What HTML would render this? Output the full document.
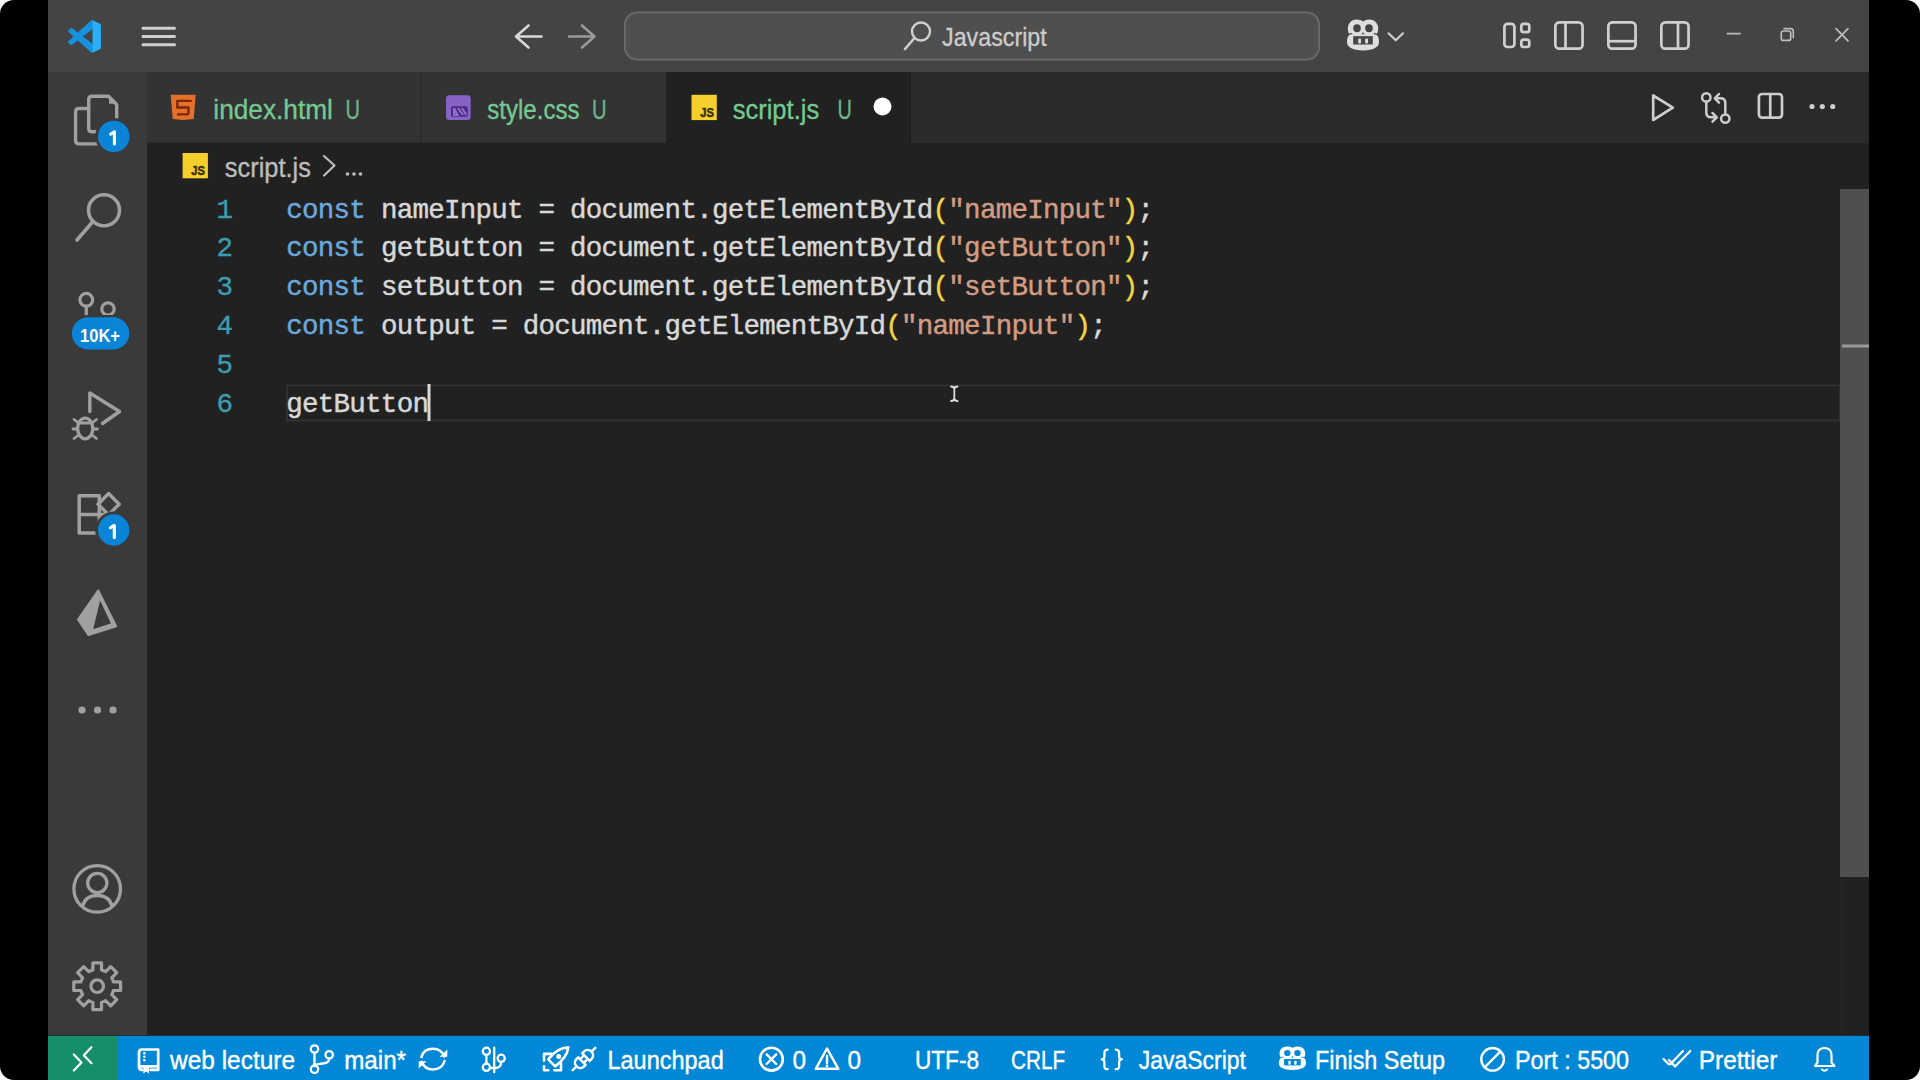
<!DOCTYPE html>
<html><head><meta charset="utf-8"><style>
html,body{margin:0;padding:0;background:#fff;width:1920px;height:1080px;overflow:hidden}
svg{display:block} #w{width:1920px;height:1080px}
</style></head><body><div id="w">
<svg width="1920" height="1080" viewBox="0 0 1920 1080">
<rect x="0" y="0" width="1920" height="1080" fill="#fff"/>
<rect x="0" y="0" width="1920" height="1080" rx="14" ry="14" fill="#000"/>
<rect x="48" y="0" width="1821" height="72" fill="#444444" />
<rect x="48" y="72" width="99" height="963" fill="#3a3a3a" />
<rect x="147" y="72" width="1722" height="71" fill="#2a2a2a" />
<rect x="147" y="143" width="1722" height="892" fill="#212121" />
<rect x="147" y="72" width="273" height="70.5" fill="#333333" />
<rect x="420" y="72" width="1.5" height="70.5" fill="#2a2a2a" />
<rect x="421.5" y="72" width="244.5" height="70.5" fill="#333333" />
<rect x="666" y="72" width="244" height="71" fill="#212121" />
<rect x="910" y="72" width="1" height="71" fill="#1c1c1c" />
<rect x="48" y="1035" width="1821" height="45" fill="#0087d6" />
<rect x="48" y="1035" width="69" height="45" fill="#168e6a" />
<rect x="48" y="1035" width="1821" height="1" fill="#1d3140" />
<text x="213.30" y="118.8" font-family="Liberation Sans" font-size="27" font-weight="normal" fill="#73c991" stroke="#73c991" stroke-width="0.35" textLength="119.64" lengthAdjust="spacingAndGlyphs">index.html</text>
<text x="345.60" y="118.8" font-family="Liberation Sans" font-size="27" font-weight="normal" fill="#6db58a" stroke="#6db58a" stroke-width="0.35" textLength="14.44" lengthAdjust="spacingAndGlyphs">U</text>
<text x="487.30" y="118.8" font-family="Liberation Sans" font-size="27" font-weight="normal" fill="#73c991" stroke="#73c991" stroke-width="0.35" textLength="92.18" lengthAdjust="spacingAndGlyphs">style.css</text>
<text x="592.00" y="118.8" font-family="Liberation Sans" font-size="27" font-weight="normal" fill="#6db58a" stroke="#6db58a" stroke-width="0.35" textLength="14.54" lengthAdjust="spacingAndGlyphs">U</text>
<text x="732.70" y="118.8" font-family="Liberation Sans" font-size="27" font-weight="normal" fill="#73c991" stroke="#73c991" stroke-width="0.35" textLength="86.48" lengthAdjust="spacingAndGlyphs">script.js</text>
<text x="837.60" y="118.8" font-family="Liberation Sans" font-size="27" font-weight="normal" fill="#6db58a" stroke="#6db58a" stroke-width="0.35" textLength="14.34" lengthAdjust="spacingAndGlyphs">U</text>
<circle cx="882.5" cy="106.5" r="9" fill="#ffffff"/>
<text x="224.80" y="176.5" font-family="Liberation Sans" font-size="27" font-weight="normal" fill="#bdbdbd" stroke="#bdbdbd" stroke-width="0.35" textLength="86.08" lengthAdjust="spacingAndGlyphs">script.js</text>
<path d="M324 156 L334.5 165.5 L324 175.5" stroke="#bdbdbd" stroke-width="2.2" fill="none" stroke-linecap="round" stroke-linejoin="round" />
<circle cx="347.5" cy="174" r="1.8" fill="#bdbdbd"/>
<circle cx="354" cy="174" r="1.8" fill="#bdbdbd"/>
<circle cx="360.5" cy="174" r="1.8" fill="#bdbdbd"/>
<rect x="287" y="385.5" width="1553" height="35" fill="none" stroke="#303030" stroke-width="2"/>
<text x="216.50" y="217.50" font-family="Liberation Mono" font-size="27.5" fill="#3d9cb0" stroke="#3d9cb0" stroke-width="0.35" letter-spacing="-0.740">1</text>
<text x="286.30" y="217.50" font-family="Liberation Mono" font-size="27.5" letter-spacing="-0.740" xml:space="preserve" stroke-width="0.45"><tspan fill="#6aa8de" stroke="#6aa8de">const</tspan><tspan fill="#d8d8d8" stroke="#d8d8d8"> nameInput = document.getElementById</tspan><tspan fill="#f2d444" stroke="#f2d444">(</tspan><tspan fill="#d29c82" stroke="#d29c82">&quot;nameInput&quot;</tspan><tspan fill="#f2d444" stroke="#f2d444">)</tspan><tspan fill="#d8d8d8" stroke="#d8d8d8">;</tspan></text>
<text x="216.50" y="256.40" font-family="Liberation Mono" font-size="27.5" fill="#3d9cb0" stroke="#3d9cb0" stroke-width="0.35" letter-spacing="-0.740">2</text>
<text x="286.30" y="256.40" font-family="Liberation Mono" font-size="27.5" letter-spacing="-0.740" xml:space="preserve" stroke-width="0.45"><tspan fill="#6aa8de" stroke="#6aa8de">const</tspan><tspan fill="#d8d8d8" stroke="#d8d8d8"> getButton = document.getElementById</tspan><tspan fill="#f2d444" stroke="#f2d444">(</tspan><tspan fill="#d29c82" stroke="#d29c82">&quot;getButton&quot;</tspan><tspan fill="#f2d444" stroke="#f2d444">)</tspan><tspan fill="#d8d8d8" stroke="#d8d8d8">;</tspan></text>
<text x="216.50" y="295.30" font-family="Liberation Mono" font-size="27.5" fill="#3d9cb0" stroke="#3d9cb0" stroke-width="0.35" letter-spacing="-0.740">3</text>
<text x="286.30" y="295.30" font-family="Liberation Mono" font-size="27.5" letter-spacing="-0.740" xml:space="preserve" stroke-width="0.45"><tspan fill="#6aa8de" stroke="#6aa8de">const</tspan><tspan fill="#d8d8d8" stroke="#d8d8d8"> setButton = document.getElementById</tspan><tspan fill="#f2d444" stroke="#f2d444">(</tspan><tspan fill="#d29c82" stroke="#d29c82">&quot;setButton&quot;</tspan><tspan fill="#f2d444" stroke="#f2d444">)</tspan><tspan fill="#d8d8d8" stroke="#d8d8d8">;</tspan></text>
<text x="216.50" y="334.20" font-family="Liberation Mono" font-size="27.5" fill="#3d9cb0" stroke="#3d9cb0" stroke-width="0.35" letter-spacing="-0.740">4</text>
<text x="286.30" y="334.20" font-family="Liberation Mono" font-size="27.5" letter-spacing="-0.740" xml:space="preserve" stroke-width="0.45"><tspan fill="#6aa8de" stroke="#6aa8de">const</tspan><tspan fill="#d8d8d8" stroke="#d8d8d8"> output = document.getElementById</tspan><tspan fill="#f2d444" stroke="#f2d444">(</tspan><tspan fill="#d29c82" stroke="#d29c82">&quot;nameInput&quot;</tspan><tspan fill="#f2d444" stroke="#f2d444">)</tspan><tspan fill="#d8d8d8" stroke="#d8d8d8">;</tspan></text>
<text x="216.50" y="373.10" font-family="Liberation Mono" font-size="27.5" fill="#3d9cb0" stroke="#3d9cb0" stroke-width="0.35" letter-spacing="-0.740">5</text>
<text x="216.50" y="412.00" font-family="Liberation Mono" font-size="27.5" fill="#3d9cb0" stroke="#3d9cb0" stroke-width="0.35" letter-spacing="-0.740">6</text>
<text x="286.30" y="412.00" font-family="Liberation Mono" font-size="27.5" letter-spacing="-0.740" xml:space="preserve" stroke-width="0.45"><tspan fill="#d8d8d8" stroke="#d8d8d8">getButton</tspan></text>
<rect x="427.5" y="384" width="3.0" height="37" fill="#d8d8d8" />
<rect x="1840" y="189" width="29" height="688" fill="#4f4f4f" />
<rect x="1842" y="344.5" width="27" height="3.0" fill="#9a9a9a" />
<text x="170.12" y="1068.8" font-family="Liberation Sans" font-size="25.5" font-weight="normal" fill="#ffffff" stroke="#ffffff" stroke-width="0.4" textLength="124.85" lengthAdjust="spacingAndGlyphs">web lecture</text>
<text x="344.20" y="1068.8" font-family="Liberation Sans" font-size="25.5" font-weight="normal" fill="#ffffff" stroke="#ffffff" stroke-width="0.4" textLength="61.84" lengthAdjust="spacingAndGlyphs">main*</text>
<text x="607.50" y="1068.8" font-family="Liberation Sans" font-size="25.5" font-weight="normal" fill="#ffffff" stroke="#ffffff" stroke-width="0.4" textLength="116.24" lengthAdjust="spacingAndGlyphs">Launchpad</text>
<text x="792.50" y="1068.8" font-family="Liberation Sans" font-size="25.5" font-weight="normal" fill="#ffffff" stroke="#ffffff" stroke-width="0.4" textLength="13.53" lengthAdjust="spacingAndGlyphs">0</text>
<text x="847.50" y="1068.8" font-family="Liberation Sans" font-size="25.5" font-weight="normal" fill="#ffffff" stroke="#ffffff" stroke-width="0.4" textLength="13.53" lengthAdjust="spacingAndGlyphs">0</text>
<text x="915.00" y="1068.8" font-family="Liberation Sans" font-size="25.5" font-weight="normal" fill="#ffffff" stroke="#ffffff" stroke-width="0.4" textLength="63.96" lengthAdjust="spacingAndGlyphs">UTF-8</text>
<text x="1011.00" y="1068.8" font-family="Liberation Sans" font-size="25.5" font-weight="normal" fill="#ffffff" stroke="#ffffff" stroke-width="0.4" textLength="54.03" lengthAdjust="spacingAndGlyphs">CRLF</text>
<text x="1138.75" y="1068.8" font-family="Liberation Sans" font-size="25.5" font-weight="normal" fill="#ffffff" stroke="#ffffff" stroke-width="0.4" textLength="107.22" lengthAdjust="spacingAndGlyphs">JavaScript</text>
<text x="1315.00" y="1068.8" font-family="Liberation Sans" font-size="25.5" font-weight="normal" fill="#ffffff" stroke="#ffffff" stroke-width="0.4" textLength="129.97" lengthAdjust="spacingAndGlyphs">Finish Setup</text>
<text x="1515.00" y="1068.8" font-family="Liberation Sans" font-size="25.5" font-weight="normal" fill="#ffffff" stroke="#ffffff" stroke-width="0.4" textLength="114.05" lengthAdjust="spacingAndGlyphs">Port : 5500</text>
<text x="1698.75" y="1068.8" font-family="Liberation Sans" font-size="25.5" font-weight="normal" fill="#ffffff" stroke="#ffffff" stroke-width="0.4" textLength="78.71" lengthAdjust="spacingAndGlyphs">Prettier</text>
<g transform="translate(68.2,20.2) scale(0.326)"><path d="M96.46 10.8 L75.86 0.87 C73.48 -0.28 70.63 0.21 68.76 2.08 L29.35 38.04 L12.19 25.01 C10.59 23.8 8.35 23.9 6.87 25.25 L1.36 30.26 C-0.46 31.91 -0.46 34.77 1.35 36.42 L16.28 50 L1.35 63.58 C-0.46 65.23 -0.46 68.09 1.36 69.74 L6.87 74.75 C8.35 76.1 10.59 76.2 12.19 74.99 L29.35 61.96 L68.76 97.92 C70.63 99.79 73.48 100.28 75.86 99.13 L96.46 89.2 C98.62 88.16 100 85.97 100 83.57 V16.43 C100 14.03 98.62 11.84 96.46 10.8 Z M75.01 72.7 L45.11 50 L75.01 27.3 V72.7 Z" fill="#1593de" fill-rule="evenodd"/><path d="M75 0.5 L96.46 10.8 C98.62 11.84 100 14.03 100 16.43 V83.57 C100 85.97 98.62 88.16 96.46 89.2 L75.86 99.13 L75 99.5 Z" fill="#2aaef5"/></g>
<rect x="141.7" y="26.8" width="34.1" height="3" rx="1" fill="#d0d0d0"/>
<rect x="141.7" y="34.9" width="34.1" height="3" rx="1" fill="#d0d0d0"/>
<rect x="141.7" y="43.25" width="34.1" height="3" rx="1" fill="#d0d0d0"/>
<path d="M528.5 25.5 L516 36.5 L528.5 47.5 M516 36.5 L541.5 36.5" stroke="#d8d8d8" stroke-width="2.6" fill="none" stroke-linecap="round" stroke-linejoin="round" />
<path d="M582 25.5 L594.5 36.5 L582 47.5 M594.5 36.5 L569 36.5" stroke="#9a9a9a" stroke-width="2.6" fill="none" stroke-linecap="round" stroke-linejoin="round" />
<rect x="625" y="12.5" width="694" height="47" rx="12" fill="#4f4f4f" stroke="#686868" stroke-width="2"/>
<text x="942.00" y="46" font-family="Liberation Sans" font-size="25.5" font-weight="normal" fill="#cccccc" stroke="#cccccc" stroke-width="0.35" textLength="104.74" lengthAdjust="spacingAndGlyphs">Javascript</text>
<circle cx="921" cy="31.5" r="9" fill="none" stroke="#d0d0d0" stroke-width="2.4"/>
<path d="M914.5 38 L905 49" stroke="#d0d0d0" stroke-width="2.6" fill="none" stroke-linecap="round" stroke-linejoin="round" />
<g transform="translate(1346,20.4) scale(1.0000,0.9839)"><path d="M4.5 13 C2 6 5 1 11 1 C15 1 17 3 17 6 C17 3 19 1 23 1 C29 1 32 6 29.5 13" fill="none" stroke="#dedede" stroke-width="3.6"/><ellipse cx="11" cy="8" rx="5.5" ry="5.8" fill="none" stroke="#dedede" stroke-width="3.4"/><ellipse cx="23" cy="8" rx="5.5" ry="5.8" fill="none" stroke="#dedede" stroke-width="3.4"/><path d="M1 22 C1 16 3 14 6 14 L28 14 C31 14 33 16 33 22 C33 27 28 30.5 17 30.5 C6 30.5 1 27 1 22 Z" fill="#dedede"/><rect x="7.2" y="16" width="19.6" height="8.5" fill="#474747"/><rect x="12.2" y="18.3" width="2.8" height="5.2" rx="1" fill="#dedede"/><rect x="19.2" y="18.3" width="2.8" height="5.2" rx="1" fill="#dedede"/></g>
<path d="M1388.5 33.3 L1395.8 40.3 L1403 33.3" stroke="#cfcfcf" stroke-width="2.2" fill="none" stroke-linecap="round" stroke-linejoin="round" />
<rect x="1504.4" y="23.9" width="10" height="23.1" rx="3" fill="none" stroke="#d0d0d0" stroke-width="2.7"/>
<rect x="1521.3" y="23.9" width="8" height="8.3" rx="2.5" fill="none" stroke="#d0d0d0" stroke-width="2.7"/>
<rect x="1521.3" y="39.6" width="8" height="7.4" rx="2.5" fill="none" stroke="#d0d0d0" stroke-width="2.7"/>
<rect x="1555.35" y="22.35" width="27.2" height="26.3" rx="4" fill="none" stroke="#d0d0d0" stroke-width="2.7"/>
<rect x="1564.15" y="22" width="2.7" height="27" fill="#d0d0d0"/>
<rect x="1608.35" y="22.35" width="27.2" height="26.3" rx="4" fill="none" stroke="#d0d0d0" stroke-width="2.7"/>
<rect x="1607.5" y="39.85" width="29" height="2.7" fill="#d0d0d0"/>
<rect x="1661.35" y="22.35" width="27.2" height="26.3" rx="4" fill="none" stroke="#d0d0d0" stroke-width="2.7"/>
<rect x="1676.65" y="22" width="2.7" height="27" fill="#d0d0d0"/>
<path d="M1727.5 33.6 L1740 33.6" stroke="#bdbdbd" stroke-width="1.8" fill="none" stroke-linecap="round" stroke-linejoin="round" />
<rect x="1781.3" y="31" width="9.4" height="9.4" rx="2" fill="none" stroke="#bdbdbd" stroke-width="1.7"/>
<path d="M1784 28.6 L1790.5 28.6 C1792.2 28.6 1793.3 29.7 1793.3 31.4 L1793.3 37.8" stroke="#bdbdbd" stroke-width="1.6" fill="none" stroke-linecap="round" stroke-linejoin="round" />
<path d="M1836 28.6 L1848 40.9 M1848 28.6 L1836 40.9" stroke="#bdbdbd" stroke-width="1.7" fill="none" stroke-linecap="round" stroke-linejoin="round" />
<path d="M170.7 94.7 L195.7 94.7 L193.7 119 L183.2 120 L172.7 119 Z" fill="#e4702a"/>
<path d="M190.8 100.9 L177.3 100.9 L177.3 107.5 L188.5 107.5 L188.5 112.5 C188.5 113.8 187.6 114.4 186.4 114.4 L178 114.4" stroke="#7a2808" stroke-width="2.4" fill="none" stroke-linecap="round" stroke-linejoin="round" stroke-linecap="butt"/>
<rect x="446" y="95.2" width="24.7" height="24.8" rx="3.5" fill="#8763c6"/>
<rect x="451" y="106.2" width="16.8" height="10.6" rx="1.5" fill="#4c2d86"/>
<path d="M454 108.2 L457.5 115 L454 115 Z M458 108.2 L463 115 M462 108.2 L466.5 115" stroke="#8f6fce" stroke-width="2" fill="none"/>
<rect x="691.5" y="94.8" width="25.3" height="25.3" fill="#f5cf2c"/>
<text x="700.20" y="117.1" font-family="Liberation Sans" font-size="13.5" font-weight="bold" fill="#3b3205" stroke="#3b3205" stroke-width="0.6" textLength="13.62" lengthAdjust="spacingAndGlyphs">JS</text>
<rect x="182.6" y="153" width="25.3" height="25.3" fill="#f5cf2c"/>
<text x="191.30" y="175.3" font-family="Liberation Sans" font-size="13.5" font-weight="bold" fill="#3b3205" stroke="#3b3205" stroke-width="0.6" textLength="13.62" lengthAdjust="spacingAndGlyphs">JS</text>
<path d="M1653.2 95.5 L1653.2 120 L1672.8 107.7 Z" stroke="#cccccc" stroke-width="2.7" fill="none" stroke-linecap="round" stroke-linejoin="round" />
<circle cx="1706.3" cy="97.4" r="4.2" fill="none" stroke="#cccccc" stroke-width="2.5"/>
<circle cx="1725.3" cy="118.6" r="4.2" fill="none" stroke="#cccccc" stroke-width="2.5"/>
<path d="M1706.3 101.7 L1706.3 112.5 C1706.3 115.5 1708 117.3 1711 117.3 L1716.5 117.3 M1712.5 113 L1716.8 117.3 L1712.5 121.6" stroke="#cccccc" stroke-width="2.5" fill="none" stroke-linecap="round" stroke-linejoin="round" />
<path d="M1725.3 114.3 L1725.3 103 C1725.3 100 1723.6 98.3 1720.6 98.3 L1715 98.3 M1719 94 L1714.8 98.3 L1719 102.6" stroke="#cccccc" stroke-width="2.5" fill="none" stroke-linecap="round" stroke-linejoin="round" />
<rect x="1758.9" y="94" width="23.1" height="23.6" rx="3" fill="none" stroke="#cccccc" stroke-width="2.7"/>
<rect x="1768.9" y="93" width="2.7" height="25.5" fill="#cccccc"/>
<circle cx="1812" cy="106.5" r="2.6" fill="#cccccc"/>
<circle cx="1822.3" cy="106.5" r="2.6" fill="#cccccc"/>
<circle cx="1832.7" cy="106.5" r="2.6" fill="#cccccc"/>
<path d="M88.7 108.5 L79 108.5 C76.8 108.5 75.6 109.8 75.6 112 L75.6 140.5 C75.6 142.7 76.8 143.9 79 143.9 L99 143.9" stroke="#a0a0a0" stroke-width="3.4" fill="none" stroke-linecap="round" stroke-linejoin="round" />
<path d="M88.7 108.5 L88.7 99.5 C88.7 97.3 89.9 96.2 92 96.2 L108.5 96.2 L116.7 104.5 L116.7 125" stroke="#a0a0a0" stroke-width="3.4" fill="none" stroke-linecap="round" stroke-linejoin="round" />
<path d="M88.7 108.5 L88.7 128.5 C88.7 130.7 89.9 131.8 92 131.8 L99 131.8" stroke="#a0a0a0" stroke-width="3.4" fill="none" stroke-linecap="round" stroke-linejoin="round" />
<path d="M109 97 L109 103.8 L116 103.8 Z" fill="#a0a0a0"/>
<circle cx="113.8" cy="136.4" r="18.5" fill="#3a3a3a"/>
<circle cx="113.8" cy="136.4" r="15.7" fill="#0a84d6"/>
<path d="M110.5 134.20000000000002 L114.39999999999999 131.8 L114.39999999999999 144.0" stroke="#ffffff" stroke-width="3.1" fill="none" stroke-linecap="round" stroke-linejoin="round" stroke-linecap="butt" stroke-linejoin="miter"/>
<circle cx="104" cy="210.3" r="15.5" fill="none" stroke="#a0a0a0" stroke-width="3.5"/>
<path d="M92.5 222 L77 240" stroke="#a0a0a0" stroke-width="3.6" fill="none" stroke-linecap="round" stroke-linejoin="round" />
<circle cx="86.3" cy="299.8" r="6.4" fill="none" stroke="#a0a0a0" stroke-width="3.2"/>
<circle cx="108" cy="309" r="6.2" fill="none" stroke="#a0a0a0" stroke-width="3.2"/>
<rect x="84.7" y="305" width="3.2" height="14" fill="#a0a0a0"/>
<rect x="69.8" y="315" width="61.6" height="36.8" rx="18.4" fill="#3a3a3a"/>
<rect x="71.9" y="317.2" width="57.4" height="32.4" rx="16.2" fill="#0a84d6"/>
<text x="80.00" y="341.6" font-family="Liberation Sans" font-size="18" font-weight="bold" fill="#ffffff" textLength="39.97" lengthAdjust="spacingAndGlyphs">10K+</text>
<path d="M89.8 411.5 L89.8 393 L119.5 411.5 L102.5 423.5" stroke="#a0a0a0" stroke-width="3.4" fill="none" stroke-linecap="round" stroke-linejoin="round" />
<ellipse cx="85.2" cy="428.5" rx="7.6" ry="10.3" fill="none" stroke="#a0a0a0" stroke-width="3.3"/>
<path d="M78 423 L92.5 423" stroke="#a0a0a0" stroke-width="3" fill="none" stroke-linecap="round" stroke-linejoin="round" />
<path d="M74 419.5 L78 422.5 M96.5 419.5 L92.5 422.5 M73 429 L77.5 429 M97.5 429 L93 429 M74 438.5 L78 435.5 M96.5 438.5 L92.5 435.5" stroke="#a0a0a0" stroke-width="2.8" fill="none" stroke-linecap="round" stroke-linejoin="round" />
<path d="M99.3 514.4 L99.3 495.8 L79.2 495.8 L79.2 533 L110 533 L110 514.4 L79.2 514.4" stroke="#a0a0a0" stroke-width="3.5" fill="none" stroke-linecap="round" stroke-linejoin="round" stroke-linejoin="round"/>
<path d="M99.3 514.4 L99.3 533" stroke="#a0a0a0" stroke-width="3.5" fill="none" stroke-linecap="round" stroke-linejoin="round" />
<path d="M108.6 493.5 L119.2 504.2 L108.6 514.8 L98 504.2 Z" stroke="#a0a0a0" stroke-width="3.4" fill="none" stroke-linecap="round" stroke-linejoin="round" />
<circle cx="113.7" cy="530" r="18.5" fill="#3a3a3a"/>
<circle cx="113.7" cy="530" r="15.7" fill="#0a84d6"/>
<path d="M110.4 527.8 L114.3 525.4 L114.3 537.6" stroke="#ffffff" stroke-width="3.1" fill="none" stroke-linecap="round" stroke-linejoin="round" stroke-linecap="butt" stroke-linejoin="miter"/>
<path d="M98.2 590.5 L78 619.5 L88.4 635 L116.2 626.3 Z M99.8 597.5 L112.3 624 L91.8 630.8 Z" fill="#a0a0a0" fill-rule="evenodd" stroke="#a0a0a0" stroke-width="2" stroke-linejoin="round"/>
<circle cx="82" cy="710" r="3.6" fill="#a0a0a0"/>
<circle cx="97.5" cy="710" r="3.6" fill="#a0a0a0"/>
<circle cx="113" cy="710" r="3.6" fill="#a0a0a0"/>
<circle cx="97.2" cy="888.9" r="23.3" fill="none" stroke="#a0a0a0" stroke-width="3.3"/>
<circle cx="97.3" cy="883" r="9.6" fill="none" stroke="#a0a0a0" stroke-width="3.3"/>
<path d="M82.5 906 C84.5 899 90 895.5 97.3 895.5 C104.6 895.5 110.1 899 112.1 906" stroke="#a0a0a0" stroke-width="3.3" fill="none" stroke-linecap="round" stroke-linejoin="round" />
<path d="M92.90 969.96 L92.90 962.80 L101.50 962.80 L101.50 969.96 A16.8 16.8 0 0 1 105.64 971.68 L110.71 966.61 L116.79 972.69 L111.72 977.76 A16.8 16.8 0 0 1 113.44 981.90 L120.60 981.90 L120.60 990.50 L113.44 990.50 A16.8 16.8 0 0 1 111.72 994.64 L116.79 999.71 L110.71 1005.79 L105.64 1000.72 A16.8 16.8 0 0 1 101.50 1002.44 L101.50 1009.60 L92.90 1009.60 L92.90 1002.44 A16.8 16.8 0 0 1 88.76 1000.72 L83.69 1005.79 L77.61 999.71 L82.68 994.64 A16.8 16.8 0 0 1 80.96 990.50 L73.80 990.50 L73.80 981.90 L80.96 981.90 A16.8 16.8 0 0 1 82.68 977.76 L77.61 972.69 L83.69 966.61 L88.76 971.68 A16.8 16.8 0 0 1 92.90 969.96 Z" stroke="#a0a0a0" stroke-width="3.2" fill="none" stroke-linecap="round" stroke-linejoin="round" />
<circle cx="97.2" cy="986.2" r="6.3" fill="none" stroke="#a0a0a0" stroke-width="3.2"/>
<path d="M73.8 1054.5 L81.5 1062.5 L73.8 1070.5" stroke="#ffffff" stroke-width="2.2" fill="none" stroke-linecap="round" stroke-linejoin="round" />
<path d="M91.5 1047.2 L83.8 1055.2 L91.5 1063.2" stroke="#ffffff" stroke-width="2.2" fill="none" stroke-linecap="round" stroke-linejoin="round" />
<path d="M139 1066.3 L139 1052.5 C139 1050.5 140 1049.5 142 1049.5 L158.2 1049.5 L158.2 1069.9 L150.5 1069.9 M142.5 1069.9 L142 1069.9 C140 1069.9 139 1068.9 139 1066.8 C139 1066.5 139.5 1066.3 142 1066.3 L158.2 1066.3" stroke="#ffffff" stroke-width="2.7" fill="none" stroke-linecap="round" stroke-linejoin="round" />
<circle cx="144.3" cy="1053.3" r="1.3" fill="#ffffff"/>
<circle cx="144.3" cy="1056.8" r="1.3" fill="#ffffff"/>
<circle cx="144.3" cy="1060.3" r="1.3" fill="#ffffff"/>
<path d="M143.3 1067 L149 1067 L149 1073.4 L146.2 1071.6 L143.3 1073.4 Z" fill="#ffffff"/>
<circle cx="314.5" cy="1049" r="3.7" fill="none" stroke="#ffffff" stroke-width="2.3"/>
<circle cx="314.5" cy="1069.2" r="3.7" fill="none" stroke="#ffffff" stroke-width="2.3"/>
<circle cx="329.2" cy="1054.8" r="3.7" fill="none" stroke="#ffffff" stroke-width="2.3"/>
<path d="M314.5 1052.7 L314.5 1065.5 M329.2 1058.5 C329.2 1063 325 1063.3 320 1063.8 C316.5 1064.2 314.5 1065 314.5 1066" stroke="#ffffff" stroke-width="2.3" fill="none" stroke-linecap="round" stroke-linejoin="round" />
<path d="M421.5 1057 C423 1051.5 427.5 1048.8 433 1048.8 C438.3 1048.8 442.5 1051.8 444.3 1056.5 M444.5 1061 C443 1066.5 438.5 1069.5 433 1069.5 C427.6 1069.5 423.4 1066.5 421.6 1061.8" stroke="#ffffff" stroke-width="2.5" fill="none" stroke-linecap="round" stroke-linejoin="round" />
<path d="M439.5 1056.8 L447.3 1056.8 L447.3 1049.5 Z" fill="#ffffff"/>
<path d="M426.5 1061.3 L418.7 1061.3 L418.7 1068.6 Z" fill="#ffffff"/>
<circle cx="486.4" cy="1051.3" r="3.6" fill="none" stroke="#ffffff" stroke-width="2.3"/>
<circle cx="486.4" cy="1067.3" r="3.6" fill="none" stroke="#ffffff" stroke-width="2.3"/>
<circle cx="501.2" cy="1058.3" r="3.6" fill="none" stroke="#ffffff" stroke-width="2.3"/>
<path d="M486.4 1055 L486.4 1063.6 M494.2 1047.6 L494.2 1072.3 M501.2 1062 C501.2 1066 499 1068 495 1068 L490 1068" stroke="#ffffff" stroke-width="2.3" fill="none" stroke-linecap="round" stroke-linejoin="round" />
<path d="M568.3 1047.4 C561 1047.6 554.2 1051.6 548.2 1059.4 L555.2 1066.4 C563 1060.4 567.6 1054 568.3 1047.4 Z" stroke="#ffffff" stroke-width="2.6" fill="none" stroke-linecap="round" stroke-linejoin="round" />
<path d="M551.8 1053.9 L544 1053.9 L544 1060.6" stroke="#ffffff" stroke-width="2.6" fill="none" stroke-linecap="round" stroke-linejoin="round" />
<path d="M561 1062.4 L561 1070.3 L554.2 1070.3" stroke="#ffffff" stroke-width="2.6" fill="none" stroke-linecap="round" stroke-linejoin="round" />
<path d="M544 1066.2 L544 1070.3 L548.3 1070.3" stroke="#ffffff" stroke-width="2.6" fill="none" stroke-linecap="round" stroke-linejoin="round" />
<circle cx="558.7" cy="1056.6" r="2.5" fill="#ffffff"/>
<g transform="translate(584.05,1059) rotate(-44.6)" fill="none" stroke="#ffffff" stroke-width="2.5" stroke-linecap="round" stroke-linejoin="round"><path d="M-16 0 L-10.5 0 M-3 -5.3 L-5.5 -5.3 C-8.4 -5.3 -10.5 -3 -10.5 0 C-10.5 3 -8.4 5.3 -5.5 5.3 L-3 5.3 Z M-3 -2.6 L0.6 -2.6 M-3 2.6 L0.6 2.6 M2.8 -5.3 L5.2 -5.3 C8.2 -5.3 10.4 -3 10.4 0 C10.4 3 8.2 5.3 5.2 5.3 L2.8 5.3 Z M10.4 0 L15.8 0"/></g>
<circle cx="771.4" cy="1059.2" r="11.4" fill="none" stroke="#ffffff" stroke-width="2.6"/>
<path d="M766.6 1054.4 L776.2 1064 M776.2 1054.4 L766.6 1064" stroke="#ffffff" stroke-width="2.4" fill="none" stroke-linecap="round" stroke-linejoin="round" />
<path d="M827 1048.5 L815.8 1068.8 L838.3 1068.8 Z" stroke="#ffffff" stroke-width="2.5" fill="none" stroke-linecap="round" stroke-linejoin="round" />
<path d="M827 1056 L827 1063" stroke="#ffffff" stroke-width="2.4" fill="none" stroke-linecap="round" stroke-linejoin="round" />
<circle cx="827" cy="1066" r="1.4" fill="#ffffff"/>
<path d="M1107.7 1049.6 C1105.2 1049.6 1104.4 1050.6 1104.4 1053 L1104.4 1056.6 C1104.4 1058.4 1103.6 1059.3 1101.6 1059.3 C1103.6 1059.3 1104.4 1060.2 1104.4 1062 L1104.4 1066.2 C1104.4 1068.6 1105.2 1069.2 1107.7 1069.2" stroke="#ffffff" stroke-width="2.3" fill="none" stroke-linecap="round" stroke-linejoin="round" />
<path d="M1115.8 1049.6 C1118.3 1049.6 1119.1 1050.6 1119.1 1053 L1119.1 1056.6 C1119.1 1058.4 1119.9 1059.3 1121.9 1059.3 C1119.9 1059.3 1119.1 1060.2 1119.1 1062 L1119.1 1066.2 C1119.1 1068.6 1118.3 1069.2 1115.8 1069.2" stroke="#ffffff" stroke-width="2.3" fill="none" stroke-linecap="round" stroke-linejoin="round" />
<g transform="translate(1278,1047) scale(0.8471,0.7516)"><path d="M4.5 13 C2 6 5 1 11 1 C15 1 17 3 17 6 C17 3 19 1 23 1 C29 1 32 6 29.5 13" fill="none" stroke="#ffffff" stroke-width="3.6"/><ellipse cx="11" cy="8" rx="5.5" ry="5.8" fill="none" stroke="#ffffff" stroke-width="3.4"/><ellipse cx="23" cy="8" rx="5.5" ry="5.8" fill="none" stroke="#ffffff" stroke-width="3.4"/><path d="M1 22 C1 16 3 14 6 14 L28 14 C31 14 33 16 33 22 C33 27 28 30.5 17 30.5 C6 30.5 1 27 1 22 Z" fill="#ffffff"/><rect x="7.2" y="16" width="19.6" height="8.5" fill="#0087d6"/><rect x="12.2" y="18.3" width="2.8" height="5.2" rx="1" fill="#ffffff"/><rect x="19.2" y="18.3" width="2.8" height="5.2" rx="1" fill="#ffffff"/></g>
<circle cx="1492.6" cy="1059.3" r="11.3" fill="none" stroke="#ffffff" stroke-width="2.4"/>
<path d="M1485 1067 L1500.2 1051.6" stroke="#ffffff" stroke-width="2.4" fill="none" stroke-linecap="round" stroke-linejoin="round" />
<path d="M1663.5 1059 L1668.5 1064 M1670 1064.5 L1683 1051 M1669 1060 L1675 1066.5 L1690.3 1051" stroke="#ffffff" stroke-width="2.2" fill="none" stroke-linecap="round" stroke-linejoin="round" />
<path d="M1815 1066 L1817.5 1062.5 L1817.5 1055.5 C1817.5 1050.5 1820 1048 1824.5 1048 C1829 1048 1831.5 1050.5 1831.5 1055.5 L1831.5 1062.5 L1834.5 1066 Z" stroke="#ffffff" stroke-width="2.2" fill="none" stroke-linecap="round" stroke-linejoin="round" />
<path d="M1822 1069.5 C1822.5 1071 1826.5 1071 1827 1069.5" stroke="#ffffff" stroke-width="2" fill="none" stroke-linecap="round" stroke-linejoin="round" />
<rect x="1841" y="877.5" width="1.5" height="157.5" fill="#292929" />
<path d="M951 386.5 C953 386.5 954.3 387.2 954.3 389 L954.3 398 C954.3 400 953 401 951 401 M957.6 386.5 C955.6 386.5 954.3 387.2 954.3 389 M957.6 401 C955.6 401 954.3 400 954.3 398" stroke="#dcdcdc" stroke-width="1.8" fill="none" stroke-linecap="round" stroke-linejoin="round" />
</svg></div>
</body></html>
